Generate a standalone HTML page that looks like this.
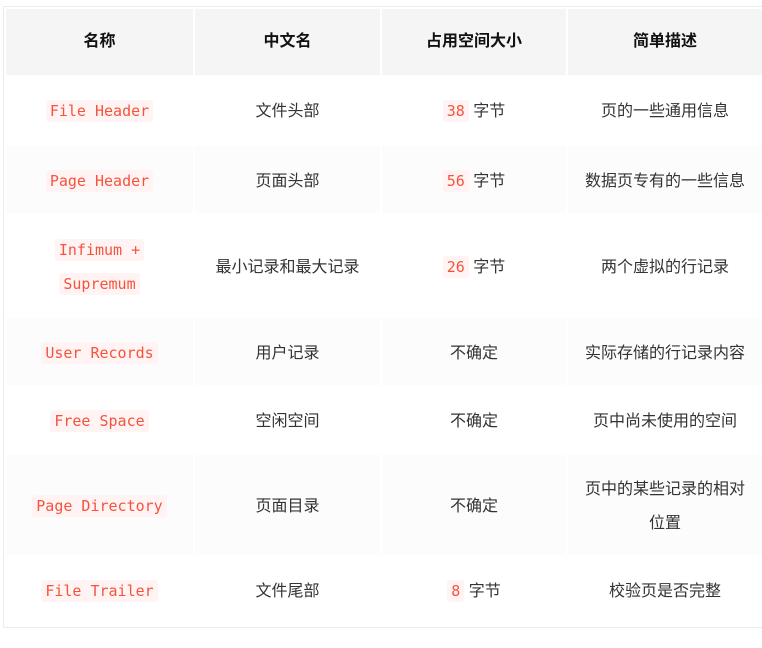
<!DOCTYPE html>
<html><head><meta charset="utf-8"><style>
*{margin:0;padding:0;box-sizing:border-box}
body{width:762px;height:648px;background:#fff;position:relative;overflow:hidden;font-family:"Liberation Sans","Noto Sans CJK SC",sans-serif;color:#333;font-size:16px}
.frame{position:absolute;left:3px;top:6px;width:762px;height:622px;border:1px solid #ececec;border-right:none}
.c{position:absolute;display:flex;align-items:center;justify-content:center;text-align:center;line-height:34px;padding:4px 10px 0}
.h{background:#f5f5f5;font-weight:bold;color:#111;padding-top:0}
.e{background:#fcfcfc}
code{font-family:"DejaVu Sans Mono",monospace;font-size:15px;color:#f5533d;background:#fff4f3;padding:2px 4px;border-radius:3px;line-height:20px}
</style></head><body>
<div class="frame"></div>
<div id="t"></div>
<script>
var cols=[[6,187],[195,185],[382,184],[568,194]];
var rows=[
[9,66,'h',['名称','中文名','占用空间大小','简单描述']],
[76,68,'',['<code>File Header</code>','文件头部','<code>38</code> 字节','页的一些通用信息']],
[146,67,'e',['<code>Page Header</code>','页面头部','<code>56</code> 字节','数据页专有的一些信息']],
[214,103,'',['<code>Infimum +</code><br><code>Supremum</code>','最小记录和最大记录','<code>26</code> 字节','两个虚拟的行记录']],
[318,67,'e',['<code>User Records</code>','用户记录','不确定','实际存储的行记录内容']],
[386,68,'',['<code>Free Space</code>','空闲空间','不确定','页中尚未使用的空间']],
[455,100,'e',['<code>Page Directory</code>','页面目录','不确定','页中的某些记录的相对<br>位置']],
[556,68,'',['<code>File Trailer</code>','文件尾部','<code>8</code> 字节','校验页是否完整']]];
var h='';
rows.forEach(function(r){cols.forEach(function(c,i){h+='<div class="c '+r[2]+'" style="left:'+c[0]+'px;top:'+r[0]+'px;width:'+c[1]+'px;height:'+r[1]+'px"><span>'+r[3][i]+'</span></div>';});});
document.getElementById('t').innerHTML=h;
</script>
</body></html>
